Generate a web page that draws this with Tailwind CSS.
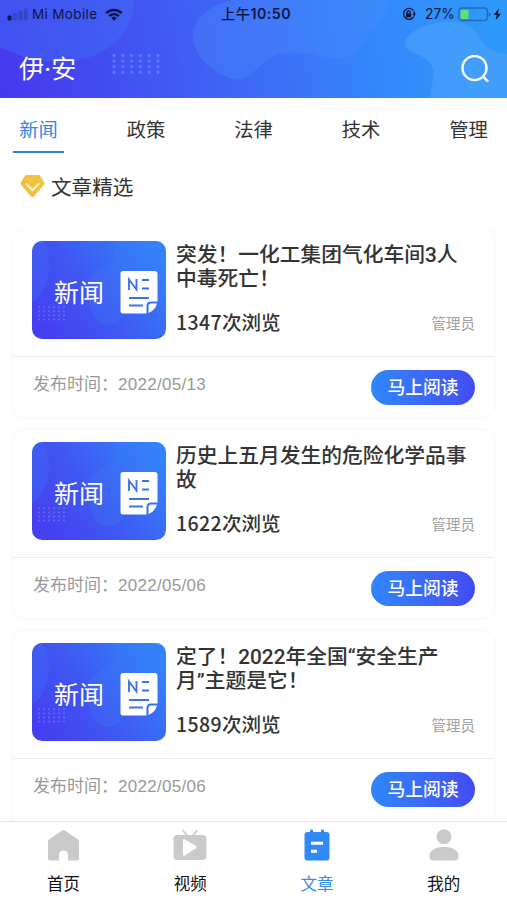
<!DOCTYPE html>
<html lang="zh-CN">
<head>
  <meta charset="UTF-8">
  <meta name="viewport" content="width=device-width, initial-scale=1.0">
  <title>文章</title>
  <script src="https://cdn.jsdelivr.net/npm/@tailwindcss/browser@4"></script>
</head>
<body class="bg-white">
  <!-- shared artwork -->
  <svg class="absolute w-0 h-0">
    <defs>
      <linearGradient id="g-head" gradientUnits="userSpaceOnUse" x1="0" y1="98" x2="490" y2="20">
        <stop offset="0" stop-color="#4638ee" />
        <stop offset="0.25" stop-color="#4250f2" />
        <stop offset="0.5" stop-color="#3e69f6" />
        <stop offset="0.78" stop-color="#3389fa" />
        <stop offset="1" stop-color="#2f98fb" />
      </linearGradient>
      <linearGradient id="g-thumb" x1="0" y1="0.75" x2="1" y2="0.25">
        <stop offset="0" stop-color="#463ff0" />
        <stop offset="0.45" stop-color="#3f58f2" />
        <stop offset="1" stop-color="#3283fa" />
      </linearGradient>
      <pattern id="dots-head" width="8.8" height="5.6" patternUnits="userSpaceOnUse" x="112" y="53">
        <circle cx="2" cy="2.5" r="1.5" fill="#7a9cfb" fill-opacity="0.55" />
      </pattern>
      <pattern id="dots-thumb" width="5" height="4.2" patternUnits="userSpaceOnUse" x="5" y="64">
        <circle cx="2" cy="2" r="0.8" fill="#8fa2fb" fill-opacity="0.6" />
      </pattern>
    </defs>
    <symbol id="thumb" viewBox="0 0 134 98">
      <rect width="134" height="98" fill="url(#g-thumb)" />
      <path d="M0 0H11C18 12 19 28 14 42C11 52 6 59 0 61Z" fill="#3f6cf5" fill-opacity="0.4" />
      <path d="M134 0H84C82 10 83 17 77 22C70 26 64 29 59 36C54 44 58 50 57 60C59 75 66 84 76 84C88 84 90 74 98 65C108 53 121 44 134 40Z" fill="#3d80f8" fill-opacity="0.25" />
      <rect x="5" y="64" width="28" height="16.5" fill="url(#dots-thumb)" />
      <path d="M91 30H122.500Q125.500 30 125.500 33V60.500H119Q114.500 60.500 114.500 65V72.500H91Q88.500 72.500 88.500 70V32.500Q88.500 30 91 30Z" fill="#fff" />
      <path d="M116.500 72V65Q116.500 62.500 119 62.500H125Q123 69.500 116.500 72Z" fill="#fff" />
      <path d="M97 49V38.500L104.500 48.500V38M110 39H117M110 47.500H117M97 57H117M97 64.500H111" fill="none" stroke="#3d72e8" stroke-width="1.900" />
    </symbol>
  </svg>

  <div class="w-[507px] h-[900px] overflow-hidden flex flex-col bg-white text-[#333] font-['Inter','Noto_Sans_CJK_SC',sans-serif]">
    <!-- header -->
    <header class="relative h-[98px] shrink-0 overflow-hidden">
      <svg class="absolute inset-0" width="507" height="98" viewBox="0 0 507 98">
        <rect width="507" height="98" fill="url(#g-head)" />
        <path d="M0 0H134C135 20 122 39 107 49C88 62 58 65 34 59C18 56 9 50 0 48Z" fill="#3f72f5" fill-opacity="0.4" />
        <path d="M235 0H389C388 13 380 22 373 30C363 41 359 55 344 58C325 60 308 50 283 53C268 56 259 68 250 75C244 80 238 81 230 78C213 72 195 57 193 39C192 20 207 5 235 0Z" fill="#4a8cfc" fill-opacity="0.35" />
        <path d="M405 42C410 30 428 22 450 22C468 22 475 28 481 40C487 50 496 54 507 54V98H431C430 86 438 71 429 62C422 53 404 53 405 42Z" fill="#51a6fc" fill-opacity="0.55" />
        <rect x="112" y="53" width="49" height="22" fill="url(#dots-head)" />
      </svg>
      <div class="relative h-7 flex items-center text-[#0c1540] text-[13.500px]">
        <svg class="ml-[7px]" width="21" height="13" viewBox="0 0 21 13" fill="#101a55">
          <rect x="0.500" y="7.500" width="4" height="5" rx="1.200" />
          <rect x="6" y="5" width="4" height="7.500" rx="1" opacity="0.25" />
          <rect x="11.500" y="3" width="4" height="9.500" rx="1" opacity="0.25" />
          <rect x="17" y="0.500" width="3.500" height="12" rx="1" opacity="0.25" />
        </svg>
        <span class="ml-[4px] w-[67px] whitespace-nowrap tracking-[0.35px]">Mi Mobile</span>
        <svg class="ml-[6px]" width="18" height="13" viewBox="0 0 18 13" fill="none" stroke="#0c1540" stroke-width="2.500">
          <path d="M1.200 5.200C5.500 0.800 12.500 0.800 16.800 5.200" />
          <path d="M4.200 8.200C7 5.500 11 5.500 13.800 8.200" />
          <path d="M6.300 9.900C7.800 8.500 10.200 8.500 11.700 9.900L9 12.700Z" fill="#0c1540" stroke="none" />
        </svg>
        <span class="absolute left-[221px] whitespace-nowrap text-[14.200px] font-medium tracking-[0.5px]">上午<span class="font-semibold">10:50</span></span>
        <svg class="absolute left-[402px]" width="14" height="14" viewBox="0 0 14 14" fill="none" stroke="#0c1540" stroke-width="1.300">
          <path d="M11.500 3.500A5.500 5.500 0 1 0 12 9.500M12.300 4.500V8" />
          <path d="M10.300 6.800H14L12.200 9.200Z" fill="#0c1540" stroke="none" />
          <rect x="4" y="6.300" width="5.200" height="4" rx="0.500" fill="#0c1540" stroke="none" />
          <path d="M5.100 6.500V5.100Q5.100 3.800 6.600 3.800Q8.100 3.800 8.100 5.100V6.500" />
        </svg>
        <span class="absolute left-[425px] text-[13.800px]">27%</span>
        <svg class="absolute left-[458px]" width="44" height="15" viewBox="0 0 44 15">
          <rect x="0.800" y="1" width="28.500" height="12.500" rx="3" fill="none" stroke="#216bb2" stroke-width="1.300" />
          <rect x="2.500" y="2.700" width="8" height="9.200" rx="1.500" fill="#5fe072" />
          <path d="M30.700 5V9.800Q32.700 9.200 32.700 7.400Q32.700 5.600 30.700 5Z" fill="#216bb2" />
          <path d="M41 1.500L35.500 8H38.700L37.500 13.500L43 6.700H39.800Z" fill="#0c1540" />
        </svg>
      </div>
      <div class="relative h-[70px] flex items-center justify-between pl-[19px] pr-[16px] text-white">
        <h1 class="pt-[12px] text-[25px] leading-none whitespace-nowrap">伊·安</h1>
        <svg class="mt-[14px]" width="30" height="30" viewBox="0 0 30 30" fill="none" stroke="#fff" stroke-width="2.400" stroke-linecap="round">
          <circle cx="13.500" cy="12.500" r="12" class="translate-y-[0.500px]" />
          <path d="M22 21.500L26.500 25.800" />
        </svg>
      </div>
    </header>

    <!-- tabs -->
    <nav class="h-[55px] shrink-0 flex justify-between pl-[13px] pr-[13px] text-[19.300px] leading-[65px] text-center whitespace-nowrap">
      <a class="w-[51px] h-[55px] text-[#3487e6] border-b-[2px] border-[#3480d6]">新闻</a>
      <a class="w-[51px]">政策</a>
      <a class="w-[51px]">法律</a>
      <a class="w-[51px]">技术</a>
      <a class="w-[51px]">管理</a>
    </nav>

    <div class="h-[76px] shrink-0 flex items-start pt-[21px] pl-[20px]">
      <svg width="25" height="25" viewBox="0 0 25 25">
        <path d="M6.500 1H18.500Q19.500 1 20 1.800L24.300 8.500Q25 9.700 24 10.700L13.700 22.700Q12.500 24 11.300 22.700L1 10.700Q0 9.700 0.700 8.500L5 1.800Q5.500 1 6.500 1Z" fill="#efc244" />
        <path d="M6.300 10L12.500 16L18.700 10" fill="none" stroke="#fdf3d3" stroke-width="1.800" stroke-linecap="round" stroke-linejoin="round" />
      </svg>
      <span class="ml-[6px] text-[20.600px] leading-[27px]">文章精选</span>
    </div>

    <!-- list -->
    <main class="h-[592px] shrink-0 overflow-hidden px-[13px] flex flex-col gap-[13px]">
      <article class="h-[188px] shrink-0 rounded-xl shadow-[0_0_5px_rgba(0,0,0,0.05)]">
        <div class="h-[128px] flex pt-[12px] pl-[19px] pr-[19px] border-b border-[#ececec]">
          <div class="relative w-[134px] h-[98px] shrink-0 rounded-[10px] overflow-hidden">
            <svg width="134" height="98"><use href="#thumb" /></svg>
            <span class="absolute left-[22px] top-[35px] text-[25px] leading-[34px] text-white">新闻</span>
          </div>
          <div class="ml-[10px] pt-[2px] flex-1 whitespace-nowrap">
            <h2 class="text-[20.750px] leading-[24.200px] font-medium font-['Roboto','Noto_Sans_CJK_SC',sans-serif]">突发！一化工集团气化车间3人<br>中毒死亡！</h2>
            <div class="mt-[17px] flex items-center justify-between">
              <b class="text-[19.500px] leading-[28px] font-medium font-['Noto_Sans_CJK_SC',sans-serif]"><span class="tracking-[0.4px]">1347</span>次浏览</b>
              <span class="pt-[3px] text-[14.500px] text-[#a0a0a0]">管理员</span>
            </div>
          </div>
        </div>
        <div class="h-[60px] flex items-center justify-between pl-[20px] pr-[19px]">
          <span class="mb-[4px] text-[17px] text-[#999] whitespace-nowrap font-['Liberation_Sans','Noto_Sans_CJK_SC',sans-serif]">发布时间：<span class="tracking-[0.3px]">2022/05/13</span></span>
          <button class="w-[104px] h-[35px] rounded-full bg-linear-to-r from-[#2f86fb] to-[#434bf1] text-white text-[17.800px] leading-[36px] font-medium">马上阅读</button>
        </div>
      </article>

      <article class="h-[188px] shrink-0 rounded-xl shadow-[0_0_5px_rgba(0,0,0,0.05)]">
        <div class="h-[128px] flex pt-[12px] pl-[19px] pr-[19px] border-b border-[#ececec]">
          <div class="relative w-[134px] h-[98px] shrink-0 rounded-[10px] overflow-hidden">
            <svg width="134" height="98"><use href="#thumb" /></svg>
            <span class="absolute left-[22px] top-[35px] text-[25px] leading-[34px] text-white">新闻</span>
          </div>
          <div class="ml-[10px] pt-[2px] flex-1 whitespace-nowrap">
            <h2 class="text-[20.750px] leading-[24.200px] font-medium font-['Roboto','Noto_Sans_CJK_SC',sans-serif]">历史上五月发生的危险化学品事<br>故</h2>
            <div class="mt-[17px] flex items-center justify-between">
              <b class="text-[19.500px] leading-[28px] font-medium font-['Noto_Sans_CJK_SC',sans-serif]"><span class="tracking-[0.4px]">1622</span>次浏览</b>
              <span class="pt-[3px] text-[14.500px] text-[#a0a0a0]">管理员</span>
            </div>
          </div>
        </div>
        <div class="h-[60px] flex items-center justify-between pl-[20px] pr-[19px]">
          <span class="mb-[4px] text-[17px] text-[#999] whitespace-nowrap font-['Liberation_Sans','Noto_Sans_CJK_SC',sans-serif]">发布时间：<span class="tracking-[0.3px]">2022/05/06</span></span>
          <button class="w-[104px] h-[35px] rounded-full bg-linear-to-r from-[#2f86fb] to-[#434bf1] text-white text-[17.800px] leading-[36px] font-medium">马上阅读</button>
        </div>
      </article>

      <article class="h-[210px] shrink-0 rounded-xl shadow-[0_0_5px_rgba(0,0,0,0.05)]">
        <div class="h-[128px] flex pt-[12px] pl-[19px] pr-[19px] border-b border-[#ececec]">
          <div class="relative w-[134px] h-[98px] shrink-0 rounded-[10px] overflow-hidden">
            <svg width="134" height="98"><use href="#thumb" /></svg>
            <span class="absolute left-[22px] top-[35px] text-[25px] leading-[34px] text-white">新闻</span>
          </div>
          <div class="ml-[10px] pt-[2px] flex-1 whitespace-nowrap">
            <h2 class="text-[20.750px] leading-[24.200px] font-medium font-['Roboto','Noto_Sans_CJK_SC',sans-serif]">定了！2022年全国“安全生产<br>月”主题是它！</h2>
            <div class="mt-[17px] flex items-center justify-between">
              <b class="text-[19.500px] leading-[28px] font-medium font-['Noto_Sans_CJK_SC',sans-serif]"><span class="tracking-[0.4px]">1589</span>次浏览</b>
              <span class="pt-[3px] text-[14.500px] text-[#a0a0a0]">管理员</span>
            </div>
          </div>
        </div>
        <div class="h-[60px] flex items-center justify-between pl-[20px] pr-[19px]">
          <span class="mb-[4px] text-[17px] text-[#999] whitespace-nowrap font-['Liberation_Sans','Noto_Sans_CJK_SC',sans-serif]">发布时间：<span class="tracking-[0.3px]">2022/05/06</span></span>
          <button class="w-[104px] h-[35px] rounded-full bg-linear-to-r from-[#2f86fb] to-[#434bf1] text-white text-[17.800px] leading-[36px] font-medium">马上阅读</button>
        </div>
      </article>
    </main>

    <!-- bottom bar -->
    <footer class="flex-1 grid grid-cols-4 bg-white border-t border-[#e6e6e6] text-[16.500px] leading-6 text-[#111] text-center">
      <a class="flex flex-col items-center pt-[6px]">
        <svg class="translate-x-[0.500px]" width="34" height="34" viewBox="0 0 34 34">
          <path d="M15.500 2.600Q17 1.400 18.500 2.600L31.500 11.500Q32.500 12.300 32.500 13.500V30.500Q32.500 32.500 30.500 32.500H21.500V27Q21.500 22.500 17 22.500Q12.500 22.500 12.500 27V32.500H3.500Q1.500 32.500 1.500 30.500V13.500Q1.500 12.300 2.500 11.500Z" fill="#cacaca" />
        </svg>
        <span class="mt-[10px]">首页</span>
      </a>
      <a class="flex flex-col items-center pt-[6px]">
        <svg width="34" height="34" viewBox="0 0 34 34">
          <rect x="0.500" y="7" width="33" height="25" rx="4" fill="#cacaca" />
          <path d="M9.500 2L14.500 8M24.500 2L19.500 8" stroke="#cacaca" stroke-width="1.700" />
          <path d="M10 12.500Q10 10.500 12 11.500L23 18Q24.500 19 23 20.200L12 27.500Q10 28.500 10 26.500Z" fill="#fff" />
        </svg>
        <span class="mt-[10px]">视频</span>
      </a>
      <a class="flex flex-col items-center pt-[6px] text-[#3b8be8]">
        <svg width="34" height="34" viewBox="0 0 34 34">
          <path d="M7.500 4H10V2.300Q10 1.500 11.500 1.500Q13 1.500 13 2.300V4H21V2.300Q21 1.500 22.500 1.500Q24 1.500 24 2.300V4H26.500Q29.500 4 29.500 7V29.500Q29.500 32.500 26.500 32.500H7.500Q4.500 32.500 4.500 29.500V7Q4.500 4 7.500 4Z" fill="#3388f7" />
          <path d="M11 15.300H23M11 23.300H17" stroke="#fff" stroke-width="3" />
        </svg>
        <span class="mt-[10px]">文章</span>
      </a>
      <a class="flex flex-col items-center pt-[6px]">
        <svg width="34" height="34" viewBox="0 0 34 34" fill="#cacaca">
          <circle cx="17" cy="8.800" r="7.500" />
          <path d="M2.500 28.500C2.500 21.500 9 19 17 19C25 19 31.500 21.500 31.500 28.500Q31.500 32.500 28 32.500H6Q2.500 32.500 2.500 28.500Z" />
        </svg>
        <span class="mt-[10px]">我的</span>
      </a>
    </footer>
  </div>
</body>
</html>
